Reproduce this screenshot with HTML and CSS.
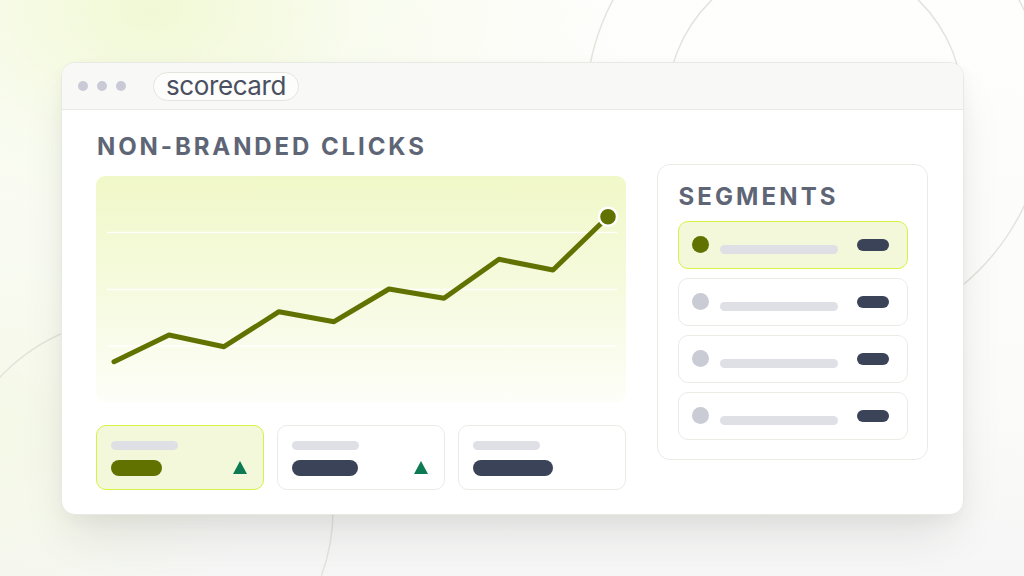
FILE: index.html
```html
<!DOCTYPE html>
<html lang="en">
<head>
<meta charset="utf-8">
<title>Scorecard</title>
<link rel="stylesheet" href="styles.css">
</head>
<body>
<svg class="backdrop" width="1024" height="576" viewBox="0 0 1024 576" aria-hidden="true">
  <circle cx="816" cy="108" r="230" fill="none" stroke="#e4e4de" stroke-width="1.5"/>
  <circle cx="815" cy="106" r="148" fill="none" stroke="#e4e4de" stroke-width="1.5"/>
  <circle cx="140" cy="510" r="193" fill="none" stroke="#e4e4de" stroke-width="1.5"/>
</svg>
<main class="window">
  <header class="titlebar">
    <div class="dots"><span></span><span></span><span></span></div>
    <div class="url">scorecard</div>
  </header>
  <section class="content">
    <div class="left">
      <h1 class="heading">NON-BRANDED CLICKS</h1>
      <div class="chart">
        <svg width="530" height="226" viewBox="0 0 530 226">
          <line x1="11" y1="56.5" x2="521" y2="56.5" class="grid"/>
          <line x1="11" y1="113.5" x2="521" y2="113.5" class="grid"/>
          <line x1="11" y1="170" x2="521" y2="170" class="grid"/>
          <polyline class="trend" points="18,185.7 73,159 128,170.7 183,135.7 238,145.7 293,113 348,122.3 403,83.3 457,94 512,40.7"/>
          <circle cx="512" cy="40.7" r="9" class="enddot"/>
        </svg>
      </div>
      <div class="stats">
        <div class="stat active">
          <span class="bar-light"></span>
          <div class="stat-row">
            <span class="bar-value olive w51"></span>
            <span class="tri"></span>
          </div>
        </div>
        <div class="stat">
          <span class="bar-light"></span>
          <div class="stat-row">
            <span class="bar-value w66"></span>
            <span class="tri"></span>
          </div>
        </div>
        <div class="stat">
          <span class="bar-light"></span>
          <div class="stat-row">
            <span class="bar-value w80"></span>
          </div>
        </div>
      </div>
    </div>
    <aside class="panel">
      <h2 class="panel-title">SEGMENTS</h2>
      <div class="seg active"><span class="dot"></span><span class="seg-bar"></span><span class="pill"></span></div>
      <div class="seg"><span class="dot"></span><span class="seg-bar"></span><span class="pill"></span></div>
      <div class="seg"><span class="dot"></span><span class="seg-bar"></span><span class="pill"></span></div>
      <div class="seg"><span class="dot"></span><span class="seg-bar"></span><span class="pill"></span></div>
    </aside>
  </section>
</main>
</body>
</html>
```

FILE: styles.css
```css
* { box-sizing: border-box; }

html, body {
  margin: 0;
  width: 1024px;
  height: 576px;
  overflow: hidden;
}

body {
  position: relative;
  font-family: Inter, "Noto Sans", "Liberation Sans", sans-serif;
  background:
    radial-gradient(ellipse 480px 320px at 150px 10px, rgba(240, 248, 208, 0.9) 0%, rgba(245, 250, 228, 0.55) 45%, rgba(255, 255, 255, 0) 100%),
    radial-gradient(ellipse 260px 260px at 0px 430px, rgba(243, 248, 225, 0.8) 0%, rgba(255, 255, 255, 0) 100%),
    linear-gradient(180deg, #fefefd 0%, #fbfbfa 70%, #f6f6f6 100%);
  padding: 62px 0 0 61px;
}

.backdrop {
  position: absolute;
  left: 0;
  top: 0;
  z-index: 0;
}

.window {
  position: relative;
  z-index: 1;
  width: 903px;
  height: 453px;
  background: #ffffff;
  border: 1px solid #e9e9e4;
  border-radius: 14px;
  overflow: hidden;
  box-shadow: 0 26px 50px -12px rgba(40, 40, 30, 0.13), 0 6px 16px rgba(40, 40, 30, 0.04);
}

.titlebar {
  height: 47px;
  background: #f8f8f6;
  border-bottom: 1px solid #e9e9e4;
  display: flex;
  align-items: center;
  padding-left: 16px;
}

.dots {
  display: flex;
  gap: 9px;
}

.dots span {
  width: 10px;
  height: 10px;
  border-radius: 50%;
  background: #c9cad6;
}

.url {
  margin-left: 27px;
  height: 29px;
  width: 146px;
  border: 1px solid #e4e4de;
  border-radius: 15px;
  background: #fdfdfc;
  display: flex;
  align-items: center;
  justify-content: center;
  font-size: 26px;
  letter-spacing: -0.4px;
  color: #4a5061;
  line-height: 1;
  padding-bottom: 1px;
}

.content {
  display: flex;
  gap: 31px;
  padding: 25px 35px 24px 34px;
}

.left {
  width: 530px;
  display: flex;
  flex-direction: column;
}

.heading {
  margin: 0;
  font-size: 24px;
  line-height: 24px;
  font-weight: 700;
  letter-spacing: 2.9px;
  color: #5e6575;
  padding-left: 1px;
}

.chart {
  margin-top: 17px;
  height: 226px;
  border-radius: 9px;
  background: linear-gradient(180deg, #f1f8c8 0%, #f5fadc 45%, #fdfef8 100%);
  overflow: hidden;
}

.chart svg { display: block; }

.grid {
  stroke: rgba(255, 255, 255, 0.9);
  stroke-width: 1.5;
}

.trend {
  fill: none;
  stroke: #617200;
  stroke-width: 5;
  stroke-linejoin: round;
  stroke-linecap: round;
}

.enddot {
  fill: #617200;
  stroke: #ffffff;
  stroke-width: 2.5;
}

.stats {
  margin-top: 23px;
  display: flex;
  gap: 13px;
}

.stat {
  width: 168px;
  height: 65px;
  border: 1.5px solid #ebebe6;
  border-radius: 10px;
  background: #ffffff;
  padding: 14.5px 16.5px 0 13.5px;
  display: flex;
  flex-direction: column;
}

.stat.active {
  background: #f2f8d9;
  border-color: #d9f044;
}

.bar-light {
  display: block;
  width: 67px;
  height: 9px;
  border-radius: 5px;
  background: #dfe0e6;
}

.stat-row {
  margin-top: 10.5px;
  display: flex;
  align-items: center;
  justify-content: space-between;
}

.bar-value {
  display: block;
  height: 15.5px;
  border-radius: 8px;
  background: #3a4358;
}

.bar-value.olive { background: #617200; }
.w51 { width: 51px; }
.w66 { width: 66px; }
.w80 { width: 80px; }

.tri {
  width: 0;
  height: 0;
  border-left: 7.5px solid transparent;
  border-right: 7.5px solid transparent;
  border-bottom: 13px solid #0c7b54;
  margin-top: -1px;
}

.panel {
  margin-top: 29px;
  width: 271px;
  height: 296px;
  border: 1.5px solid #ebebe6;
  border-radius: 13px;
  padding: 19.5px 19.5px 19px 19.5px;
  display: flex;
  flex-direction: column;
  gap: 9px;
}

.panel-title {
  margin: 0 0 3px 0;
  font-size: 24px;
  line-height: 24px;
  font-weight: 700;
  letter-spacing: 3.1px;
  color: #5e6575;
  padding-left: 1px;
}

.seg {
  height: 48px;
  border: 1.5px solid #ebebe6;
  border-radius: 10px;
  background: #ffffff;
  display: flex;
  align-items: center;
  padding: 0 17.5px 0 13px;
}

.seg.active {
  background: #f2f8d9;
  border-color: #d9f044;
}

.dot {
  width: 17px;
  height: 17px;
  border-radius: 50%;
  background: #c9cbd5;
  flex: none;
}

.seg.active .dot { background: #617200; }

.seg-bar {
  margin-left: 11.5px;
  margin-top: 9.5px;
  width: 118px;
  height: 9px;
  border-radius: 5px;
  background: #dfe0e6;
}

.pill {
  margin-left: auto;
  width: 32px;
  height: 12px;
  border-radius: 6px;
  background: #3a4358;
}
```
